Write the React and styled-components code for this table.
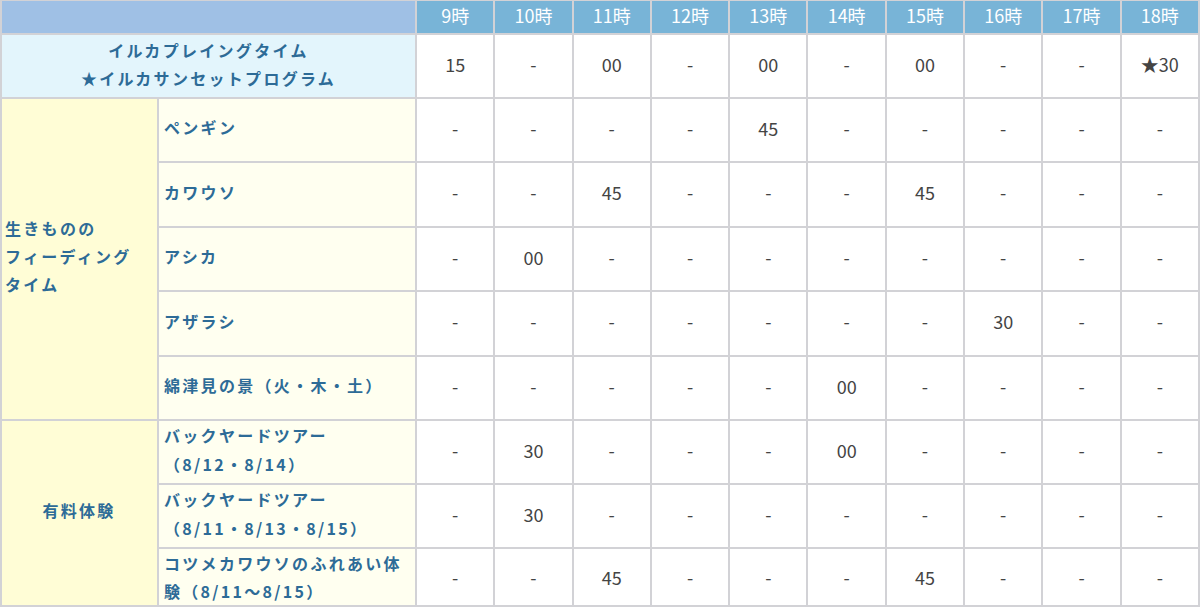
import styled, { createGlobalStyle } from "styled-components";

const GlobalStyle = createGlobalStyle`
  html, body {
    margin: 0;
    padding: 0;
    background: #ffffff;
  }
  body {
    font-family: "Noto Sans CJK JP", "Noto Sans", sans-serif;
  }
`;

const Table = styled.table`
  width: 1200px;
  border-collapse: collapse;
  table-layout: fixed;
  font-family: "Noto Sans CJK JP", "Noto Sans", sans-serif;
`;

const Row = styled.tr`
  height: ${(p) => p.h || 64}px;
`;

const HeadBlank = styled.th`
  background: #9fc0e5;
  border: 2px solid #d2d2d6;
  border-top-width: 1px;
`;

const HourHead = styled.th`
  background: #78b4d7;
  color: #ffffff;
  font-size: 18px;
  font-weight: 400;
  text-align: center;
  padding: 0 0 3px;
  border: 2px solid #d2d2d6;
  border-top-width: 1px;
`;

const ShowCell = styled.td`
  background: #e3f5fc;
  color: #2d6b97;
  font-size: 16px;
  font-weight: 700;
  letter-spacing: 2.3px;
  line-height: 28px;
  text-align: center;
  padding: 0 4px 4px;
  border: 2px solid #d2d2d6;
`;

const GroupCell = styled.td`
  background: #fffdd6;
  color: #2d6b97;
  font-size: 16px;
  font-weight: 700;
  letter-spacing: 2.3px;
  line-height: 28px;
  text-align: ${(p) => p.align || "left"};
  padding: 0 4px 6px 3px;
  border: 2px solid #d2d2d6;
`;

const SubCell = styled.td`
  background: #fffff0;
  color: #2d6b97;
  font-size: 16px;
  font-weight: 700;
  letter-spacing: 2.3px;
  line-height: ${(p) => (p.$tight ? 28 : 29)}px;
  text-align: left;
  padding: 0 4px ${(p) => (p.$tight ? 0 : 4)}px 5px;
  white-space: nowrap;
  border: 2px solid #d2d2d6;
`;

const TimeCell = styled.td`
  background: #ffffff;
  color: #444444;
  font-size: 18px;
  font-weight: 400;
  text-align: center;
  padding: 0 0 ${(p) => (p.$tight ? 0 : 4)}px;
  border: 2px solid #d2d2d6;
`;

const hours = ["9時", "10時", "11時", "12時", "13時", "14時", "15時", "16時", "17時", "18時"];

const d = "-";

const feeding = [
  { name: ["ペンギン"], times: [d, d, d, d, "45", d, d, d, d, d] },
  { name: ["カワウソ"], times: [d, d, "45", d, d, d, "45", d, d, d] },
  { name: ["アシカ"], times: [d, "00", d, d, d, d, d, d, d, d] },
  { name: ["アザラシ"], times: [d, d, d, d, d, d, d, "30", d, d] },
  { name: ["綿津見の景（火・木・土）"], times: [d, d, d, d, d, "00", d, d, d, d] },
];

const paid = [
  { name: ["バックヤードツアー", "（8/12・8/14）"], times: [d, "30", d, d, d, "00", d, d, d, d] },
  { name: ["バックヤードツアー", "（8/11・8/13・8/15）"], times: [d, "30", d, d, d, d, d, d, d, d] },
  {
    name: ["コツメカワウソのふれあい体", "験（8/11～8/15）"],
    times: [d, d, "45", d, d, d, "45", d, d, d],
    h: 58,
    tight: true,
  },
];

function Lines({ lines }) {
  return lines.map((s, i) => (
    <span key={i}>
      {i > 0 && <br />}
      {s}
    </span>
  ));
}

function Times({ times, tight }) {
  return times.map((t, i) => (
    <TimeCell key={i} $tight={tight}>
      {t}
    </TimeCell>
  ));
}

export default function App() {
  return (
    <>
      <GlobalStyle />
      <Table>
        <colgroup>
          <col style={{ width: 157 }} />
          <col style={{ width: 258 }} />
          {hours.map((h) => (
            <col key={h} />
          ))}
        </colgroup>
        <thead>
          <Row h={33}>
            <HeadBlank colSpan={2} />
            {hours.map((h) => (
              <HourHead key={h}>{h}</HourHead>
            ))}
          </Row>
        </thead>
        <tbody>
          <Row>
            <ShowCell colSpan={2}>
              イルカプレイングタイム
              <br />
              ★イルカサンセットプログラム
            </ShowCell>
            <Times times={["15", d, "00", d, "00", d, "00", d, d, "★30"]} />
          </Row>
          {feeding.map((item, index) => (
            <Row key={index} h={index % 2 ? 65 : 64}>
              {index === 0 && (
                <GroupCell rowSpan={feeding.length}>
                  生きものの
                  <br />
                  フィーディング
                  <br />
                  タイム
                </GroupCell>
              )}
              <SubCell>
                <Lines lines={item.name} />
              </SubCell>
              <Times times={item.times} />
            </Row>
          ))}
          {paid.map((item, index) => (
            <Row key={index} h={item.h || 64}>
              {index === 0 && (
                <GroupCell rowSpan={paid.length} align="center">
                  有料体験
                </GroupCell>
              )}
              <SubCell $tight={item.tight}>
                <Lines lines={item.name} />
              </SubCell>
              <Times times={item.times} tight={item.tight} />
            </Row>
          ))}
        </tbody>
      </Table>
    </>
  );
}
